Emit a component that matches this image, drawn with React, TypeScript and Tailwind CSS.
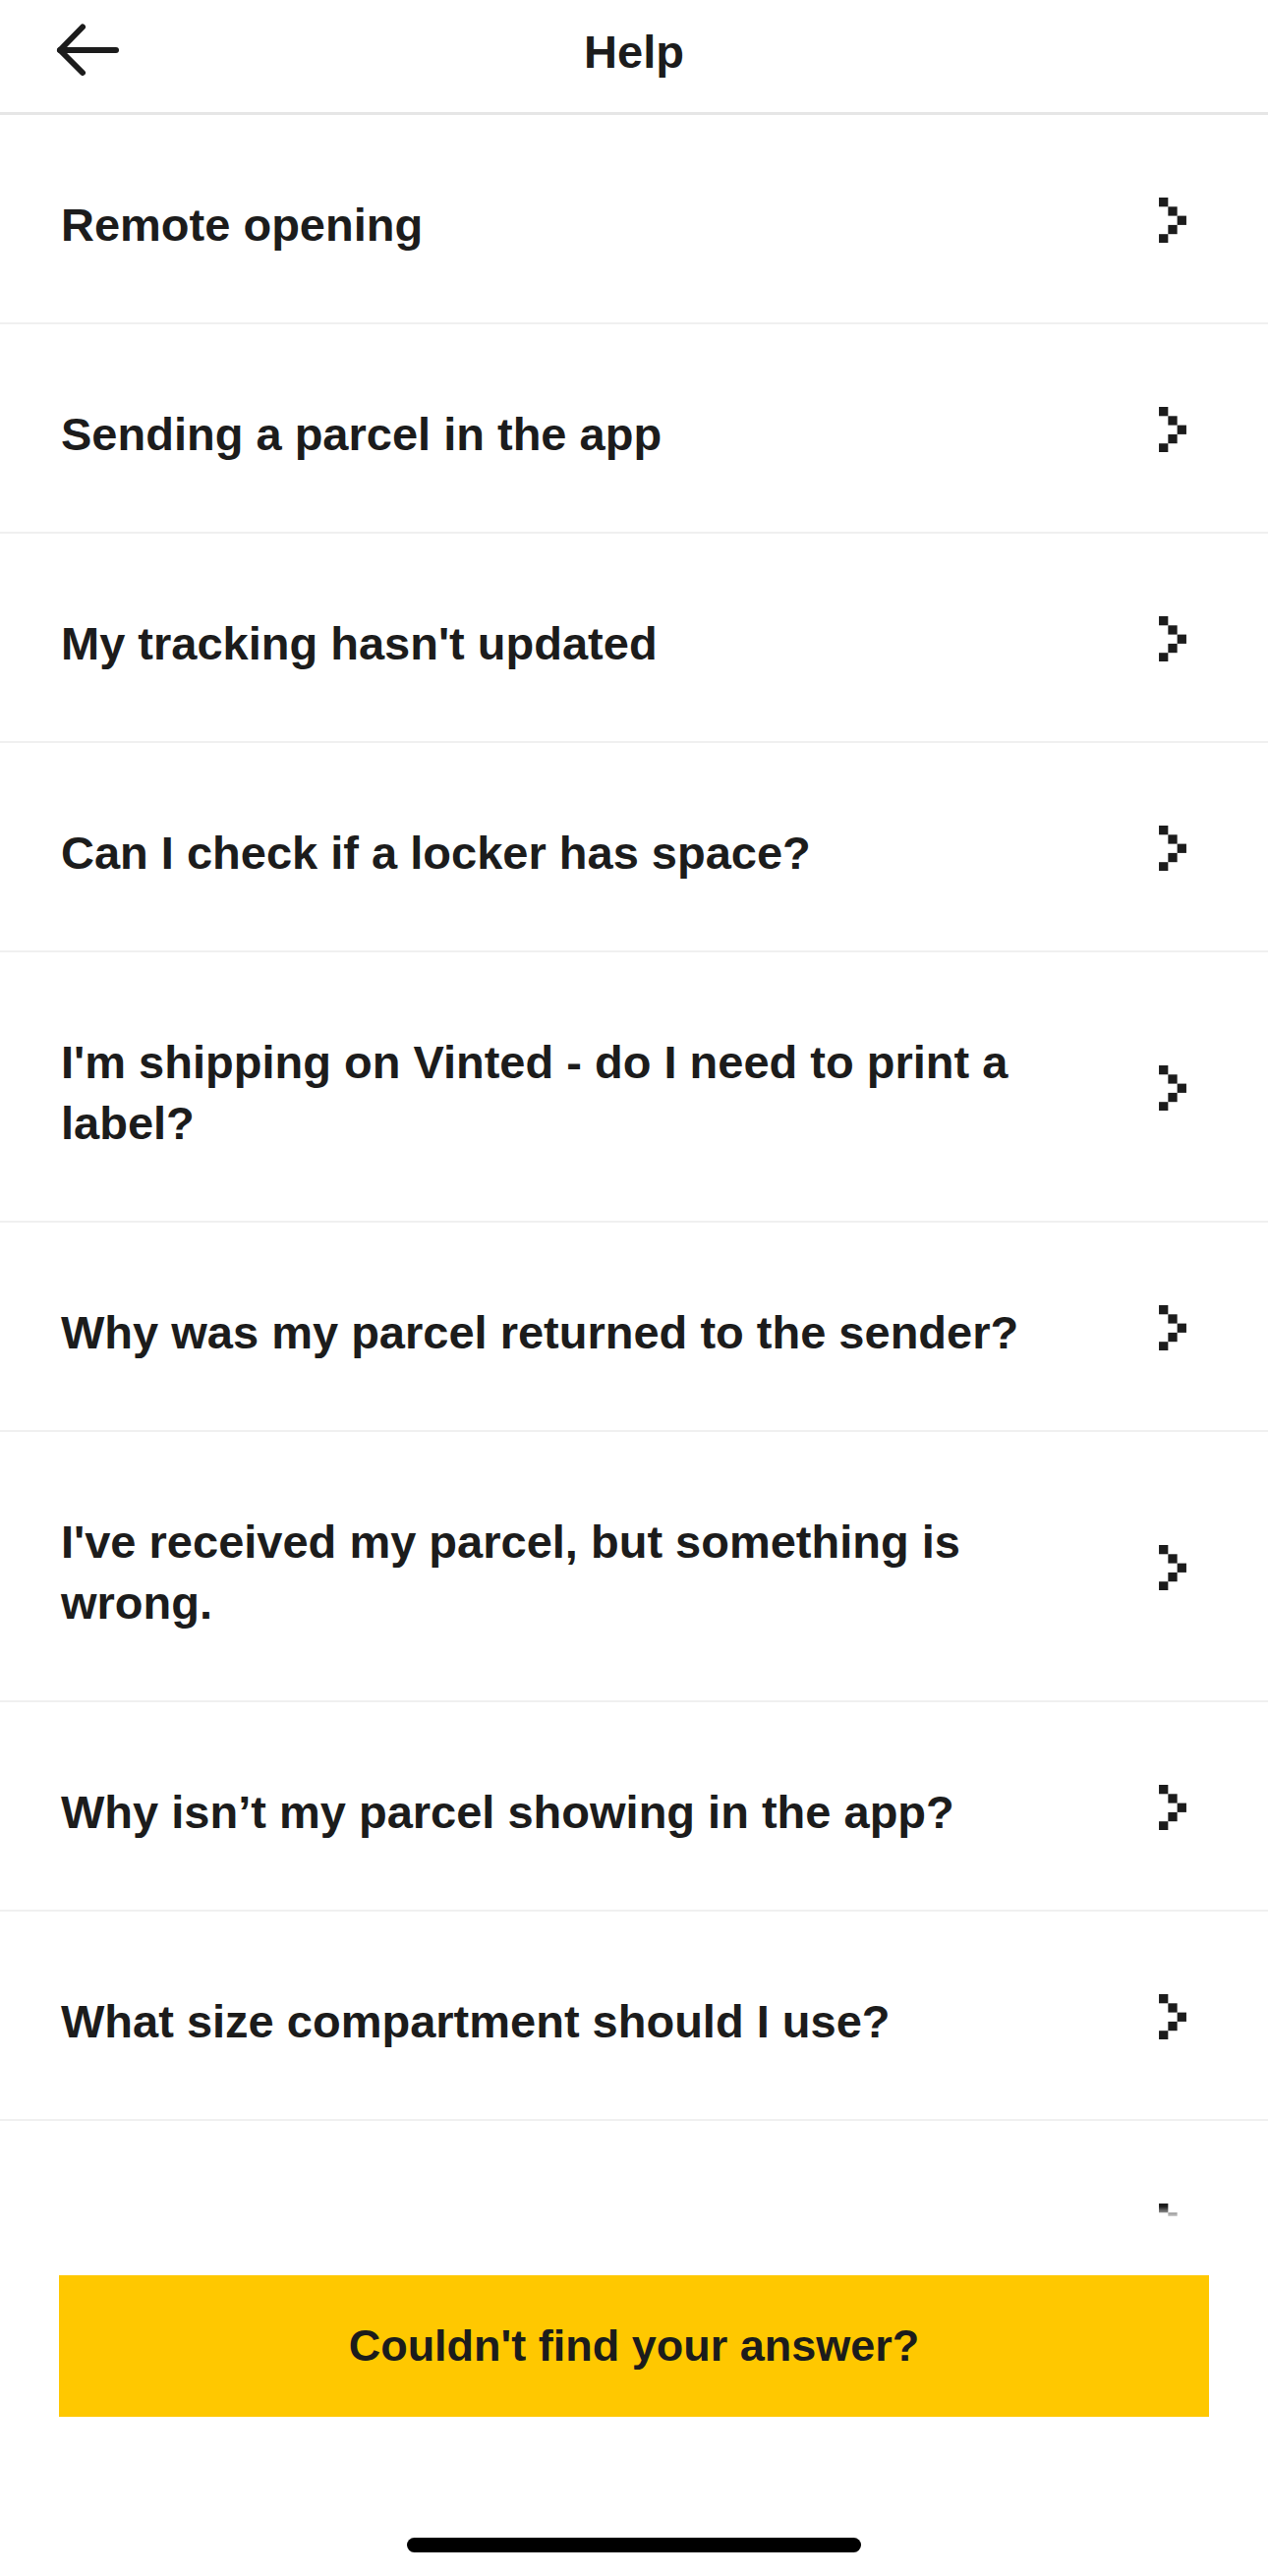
import React from "react";

const items = [
  "Remote opening",
  "Sending a parcel in the app",
  "My tracking hasn't updated",
  "Can I check if a locker has space?",
  "I'm shipping on Vinted - do I need to print a label?",
  "Why was my parcel returned to the sender?",
  "I've received my parcel, but something is wrong.",
  "Why isn\u2019t my parcel showing in the app?",
  "What size compartment should I use?",
  "\u00a0",
];

function Chevron() {
  return (
    <svg width="28" height="46.5" viewBox="0 0 3 5" className="shrink-0 mb-[9px]" fill="#1c1c1c">
      <rect x="0" y="0" width="1" height="1" />
      <rect x="1" y="1" width="1" height="1" />
      <rect x="2" y="2" width="1" height="1" />
      <rect x="1" y="3" width="1" height="1" />
      <rect x="0" y="4" width="1" height="1" />
    </svg>
  );
}

function BackArrow() {
  return (
    <svg width="70" height="58" viewBox="0 0 70 58" fill="none" stroke="#1c1c1c" strokeWidth="6" strokeLinecap="round" strokeLinejoin="round">
      <path d="M6 28 H63" />
      <path d="M29 4.5 L6 28 L29 51" />
    </svg>
  );
}

export default function App() {
  return (
    <div
      className="w-[1290px] h-[2621px] bg-white flex flex-col overflow-hidden text-[#1c1c1c]"
      style={{ fontFamily: '"Liberation Sans", Arial, sans-serif' }}
    >
      <header className="h-[117px] shrink-0 border-b-[3px] border-[#e6e6e6] pb-[10px] flex items-center">
        <div className="pl-[55px] w-[200px] flex items-center">
          <BackArrow />
        </div>
        <div className="flex-1 text-center text-[47px] font-bold leading-none">Help</div>
        <div className="w-[200px]" />
      </header>

      <div className="h-[2138px] shrink-0 overflow-hidden">
        {items.map((t, i) => (
          <div
            key={i}
            className="flex items-center pl-[62px] pr-[83px] pt-[80.5px] pb-[68.5px] border-b-2 border-[#f0f0f0]"
          >
            <div className="flex-1 pr-[77px] text-[47px] font-bold leading-[62px]">{t}</div>
            <Chevron />
          </div>
        ))}
      </div>

      <div className="flex-1 bg-white relative flex flex-col items-center">
        <div className="absolute left-0 right-0 -top-[10px] h-[10px] bg-gradient-to-b from-white/0 to-white/80" />
        <div className="mt-[60px] w-[1170px] h-[144px] bg-[#ffc800] flex items-center justify-center text-[45px] font-bold text-[#1c1c1c]">
          Couldn't find your answer?
        </div>
        <div className="mt-[123px] w-[462px] h-[15px] rounded-full bg-black" />
      </div>
    </div>
  );
}
